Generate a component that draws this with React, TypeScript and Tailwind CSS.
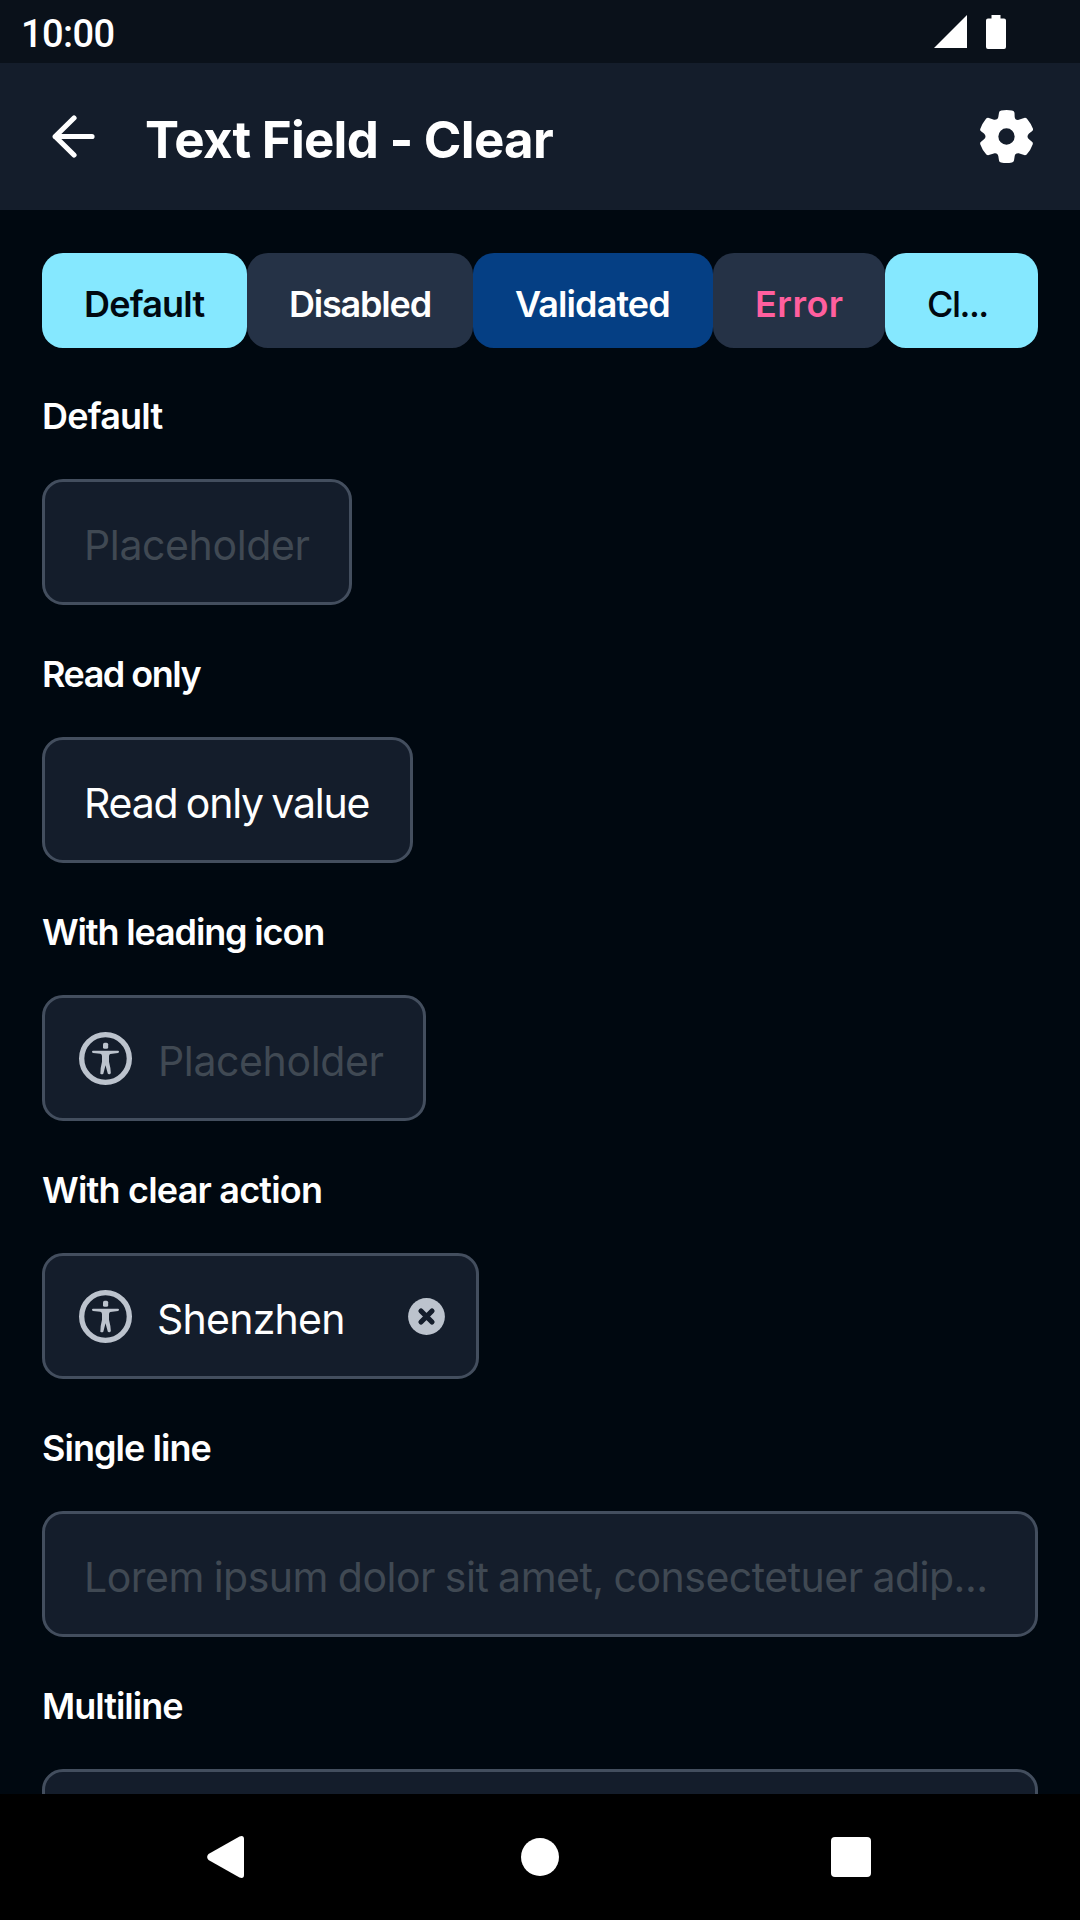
import React from "react";

const chips = [
  { label: "Default", cls: "w-[205px] bg-[#85e8ff] text-[#000810] font-semibold tracking-[-0.8px]" },
  { label: "Disabled", cls: "w-[226px] bg-[#253246] text-white font-semibold tracking-[-1.2px]" },
  { label: "Validated", cls: "w-[240px] bg-[#053f84] text-white font-semibold tracking-[-0.9px]" },
  { label: "Error", cls: "w-[172px] bg-[#253246] text-[#ff5f9e] font-semibold tracking-[0.5px]" },
  { label: "Cl...", cls: "w-[153px] bg-[#85e8ff] text-[#000810] font-medium tracking-[-1.5px]" },
];

function AccessibilityIcon() {
  return (
    <svg viewBox="57 66 159 159" className="h-[53px] w-[53px] shrink-0" fill="#bcc3cd">
      <circle cx="136.5" cy="145.5" r="71.5" fill="none" stroke="#bcc3cd" strokeWidth="16" />
      <rect x="129" y="98" width="15.5" height="18.5" rx="5" />
      <path d="M99 122H174Q177 122 177 125.500Q177 128 174 129L151 132Q147 133 147 139V155Q152 173 152.500 189Q151 193.500 147 193L143.500 191L136.500 166L130 191Q126 194.500 121 191Q121 173 126 155V138Q126 132 121 131L99 129Q96 128 96 125.500Q96 122 99 122Z" />
    </svg>
  );
}

function ClearIcon() {
  return (
    <svg viewBox="0 0 37 37" className="h-[37px] w-[37px] shrink-0">
      <circle cx="18.5" cy="18.5" r="18.4" fill="#bcc3cd" />
      <path d="M13 13L24 24M24 13L13 24" stroke="#141d2b" strokeWidth="5.2" strokeLinecap="round" />
    </svg>
  );
}

function Section({ title, titleCls, boxCls, children }: { title: string; titleCls: string; boxCls: string; children?: React.ReactNode }) {
  return (
    <section className="flex h-[258px] shrink-0 flex-col items-start">
      <h2 className={`h-[50px] text-[36px] leading-[50px] font-semibold whitespace-nowrap text-white ${titleCls}`}>{title}</h2>
      <div className={`mt-[38px] flex h-[126px] items-center rounded-[21px] border-[3px] border-[#434e5e] bg-[#141d2b] ${boxCls}`}>
        {children}
      </div>
    </section>
  );
}

export default function App() {
  const text = "pt-[6px] text-[41px] leading-[50px] whitespace-nowrap";
  return (
    <div className="flex h-[1920px] w-[1080px] flex-col overflow-hidden bg-[#000810] font-['Inter',sans-serif]">
      <div className="flex h-[63px] shrink-0 items-center bg-[#0a111a] pr-[74px] pl-[21px]">
        <span className="pt-[4px] font-['Roboto',sans-serif] text-[38px] leading-none font-medium tracking-[-0.6px] text-white">10:00</span>
        <svg viewBox="0 0 33 33" className="ml-auto h-[33px] w-[33px]" fill="white">
          <path d="M33 0V33H0Z" />
        </svg>
        <svg viewBox="0 0 20 34" className="ml-[19px] h-[34px] w-[20px]" fill="white">
          <path d="M5.500 0H14.500V3.500H18Q20 3.500 20 5.500V32Q20 34 18 34H2Q0 34 0 32V5.500Q0 3.500 2 3.500H5.500Z" />
        </svg>
      </div>

      <header className="flex h-[147px] shrink-0 items-center bg-[#141d2b] pr-[47px] pl-[52px]">
        <svg viewBox="0 0 43 43" className="h-[43px] w-[43px]" fill="none" stroke="white" strokeWidth="5.2" strokeLinecap="round" strokeLinejoin="round">
          <path d="M22 3L3.200 21.500L22 40M3.200 21.500H40" />
        </svg>
        <h1 className="ml-[50px] pt-[6px] text-[51px] leading-[60px] font-bold tracking-[-0.75px] whitespace-nowrap text-white">Text Field - Clear</h1>
        <svg viewBox="300 329.500 159 159" className="ml-auto h-[53px] w-[53px]" fill="white">
          <path
            fillRule="evenodd"
            d="M364 331Q379.500 328.500 396 331Q403 332 403.500 338L404 350Q405 360 414 359.500L430 354Q437 351 441 356Q454 372 459 386Q460 391 455 394L447 400Q438 409 447 417L455 424Q460 427 458 433Q452 450 440 463Q436 467 430 464L416 459Q405 458 404 468L402 481Q401 486 396 487Q379.500 490 363 487Q357 486 357 481L355 468Q353 458 344 459L329 464Q323 467 319 463Q306 448 301 433Q299 427 304 424L312 417Q321 409 312 400L304 394Q299 391 301 386Q306 371 318 356Q322 351 329 354L342 359Q354 360 355 350L357 338Q357 332 364 331ZM355 409A24.500 24.500 0 1 0 404 409A24.500 24.500 0 1 0 355 409Z"
          />
        </svg>
      </header>

      <main className="flex min-h-0 flex-1 flex-col overflow-hidden px-[42px] pt-[43px]">
        <div className="mb-[43px] flex h-[95px] shrink-0">
          {chips.map((c) => (
            <div key={c.label} className={`h-[95px] shrink-0 rounded-[21px] pt-[26px] pl-[42px] text-[36px] leading-[50px] whitespace-nowrap ${c.cls}`}>
              {c.label}
            </div>
          ))}
        </div>

        <Section title="Default" titleCls="tracking-[-0.8px]" boxCls="w-[310px] pl-[39px]">
          <span className={`${text} tracking-[-0.37px] text-[#404953]`}>Placeholder</span>
        </Section>
        <Section title="Read only" titleCls="tracking-[-1.5px]" boxCls="w-[371px] pl-[39px]">
          <span className={`${text} tracking-[-1.2px] [word-spacing:-2px] text-white`}>Read only value</span>
        </Section>
        <Section title="With leading icon" titleCls="tracking-[-1.15px]" boxCls="w-[384px] pl-[34px]">
          <AccessibilityIcon />
          <span className={`${text} ml-[26px] tracking-[-0.37px] text-[#404953]`}>Placeholder</span>
        </Section>
        <Section title="With clear action" titleCls="tracking-[-0.8px]" boxCls="w-[437px] pl-[34px] pr-[31.5px]">
          <AccessibilityIcon />
          <span className={`${text} ml-[25px] tracking-[-0.75px] text-white`}>Shenzhen</span>
          <span className="ml-auto">
            <ClearIcon />
          </span>
        </Section>
        <Section title="Single line" titleCls="tracking-[-0.95px]" boxCls="w-[996px] pl-[39px]">
          <span className={`${text} tracking-[-0.5px] [word-spacing:-1.2px] text-[#404953]`}>Lorem ipsum dolor sit amet, consectetuer adip...</span>
        </Section>
        <Section title="Multiline" titleCls="tracking-[-1px]" boxCls="w-[996px]" />
      </main>

      <nav className="flex h-[126px] shrink-0 items-center bg-black pl-[207px]">
        <svg viewBox="0 0 37 42" className="h-[42px] w-[37px]" fill="white">
          <path d="M1.500 18L32.500 0.500Q37 -1 37 3V39Q37 43 32.500 41.500L1.500 24Q-1.200 21 1.500 18Z" />
        </svg>
        <div className="ml-[277px] h-[38px] w-[38px] rounded-full bg-white" />
        <div className="ml-[272px] h-[40px] w-[40px] rounded-[4px] bg-white" />
      </nav>
    </div>
  );
}
